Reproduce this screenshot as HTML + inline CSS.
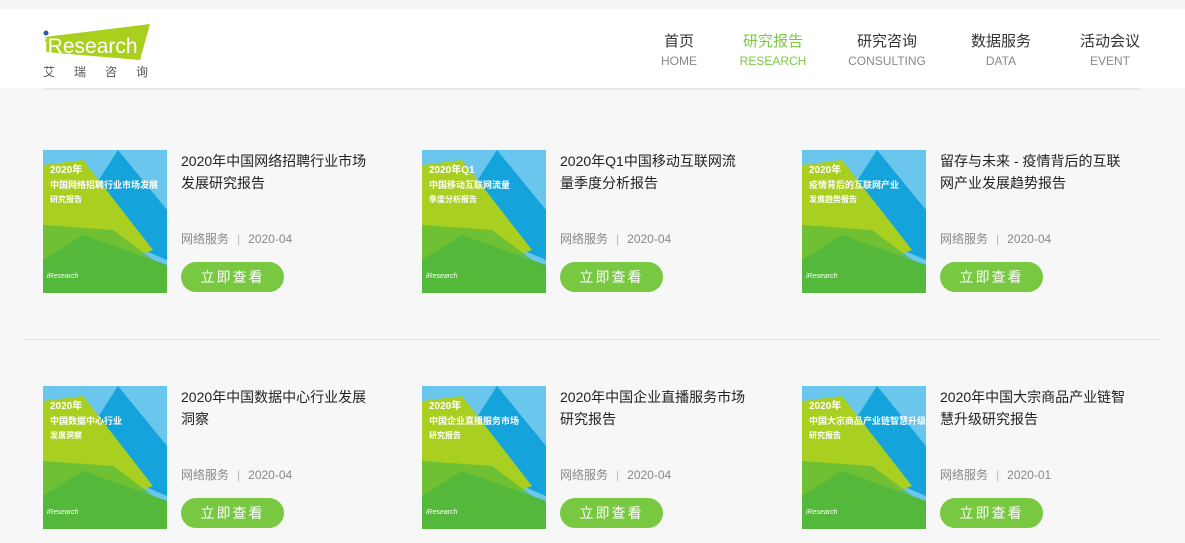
<!DOCTYPE html>
<html><head><meta charset="utf-8"><style>
*{margin:0;padding:0;box-sizing:border-box}
body{width:1185px;height:543px;overflow:hidden;background:#f7f7f7;font-family:"Liberation Sans","Noto Sans CJK SC",sans-serif;position:relative}
.top{position:absolute;left:0;top:0;width:1185px;height:9px;background:#f4f4f4}
.hdr{position:absolute;left:0;top:9px;width:1185px;height:79px;background:#fff}
.hline{position:absolute;left:44px;top:88px;width:1097px;height:2px;background:#e8e8e8}
.nav{position:absolute;top:23px;text-align:center;transform:translateX(-50%)}
.nav b{display:block;font-weight:normal;font-size:15px;color:#333;line-height:20px}
.nav i{display:block;font-style:normal;font-size:12px;color:#888;margin-top:2px;line-height:14px}
.nav.on b,.nav.on i{color:#7ac943}
.sep{position:absolute;left:24px;top:339px;width:1138px;height:1px;background:#e2e2e2}
.card{position:absolute;width:340px;height:145px}
.cov{position:absolute;left:0;top:0;width:124px;height:143px}
.tt{position:absolute;left:138px;top:0;width:188px;font-size:14px;line-height:22px;color:#222}
.meta{position:absolute;left:138px;top:80px;font-size:12px;color:#888}
.meta span{color:#bbb;margin:0 8px}
.btn{position:absolute;left:138px;top:112px;width:103px;height:30px;border-radius:15px;background:#79c842;color:#fff;font-size:14px;letter-spacing:2px;text-align:center;line-height:30px}
.ct{position:absolute;left:7px;color:#fff;font-weight:bold;font-size:9px;line-height:13px}
</style></head><body>
<div class="top"></div>
<div class="hdr">
<svg style="position:absolute;left:42px;top:14px" width="112" height="40" viewBox="0 0 112 40"><polygon points="3,14 108,1 98,37 3,29" fill="#a8d01c"/><circle cx="4" cy="10" r="2.5" fill="#2b5ea8"/><text x="1" y="30" font-family="Liberation Sans" font-size="21" fill="#fff">iResearch</text></svg>
<div style="position:absolute;left:43px;top:54px;font-size:12px;color:#555;letter-spacing:19px">艾瑞咨询</div>
<div class="nav" style="left:679px"><b>首页</b><i>HOME</i></div>
<div class="nav on" style="left:773px"><b>研究报告</b><i>RESEARCH</i></div>
<div class="nav" style="left:887px"><b>研究咨询</b><i>CONSULTING</i></div>
<div class="nav" style="left:1001px"><b>数据服务</b><i>DATA</i></div>
<div class="nav" style="left:1110px"><b>活动会议</b><i>EVENT</i></div>
</div>
<div class="hline"></div>
<div class="sep"></div>

<div id="c"></div>
<script>
var d=[
[43,150,"2020年中国网络招聘行业市场发展研究报告","2020-04","2020年","中国网络招聘行业市场发展","研究报告"],
[422,150,"2020年Q1中国移动互联网流量季度分析报告","2020-04","2020年Q1","中国移动互联网流量","季度分析报告"],
[802,150,"留存与未来 - 疫情背后的互联网产业发展趋势报告","2020-04","2020年","疫情背后的互联网产业","发展趋势报告"],
[43,386,"2020年中国数据中心行业发展洞察","2020-04","2020年","中国数据中心行业","发展洞察"],
[422,386,"2020年中国企业直播服务市场研究报告","2020-04","2020年","中国企业直播服务市场","研究报告"],
[802,386,"2020年中国大宗商品产业链智慧升级研究报告","2020-01","2020年","中国大宗商品产业链智慧升级","研究报告"]];
var h="";
d.forEach(function(a){
h+='<div class="card" style="left:'+a[0]+'px;top:'+a[1]+'px">'+
'<svg class="cov" viewBox="0 0 124 143"><rect width="124" height="143" fill="#6ac6ec"/><polygon points="75,0 124,60 124,110 30,70" fill="#14a3da"/><polygon points="0,15 40,10 110,100 0,140" fill="#a9cf20"/><polygon points="0,143 0,110 40,85 124,115 124,143" fill="#4db83a"/><polygon points="0,143 0,75 70,80 124,120 124,143" fill="#57b93a" opacity=".7"/><text x="4" y="128" font-size="7" fill="#fff" font-style="italic">iResearch</text></svg>'+
'<div class="ct" style="top:14px;font-size:10px">'+a[4]+'</div><div class="ct" style="top:29px">'+a[5]+'</div><div class="ct" style="top:43px;font-size:8px">'+a[6]+'</div>'+
'<div class="tt">'+a[2]+'</div><div class="meta">网络服务<span>|</span>'+a[3]+'</div><div class="btn">立即查看</div></div>';});
document.getElementById("c").innerHTML=h;
</script>
</body></html>
